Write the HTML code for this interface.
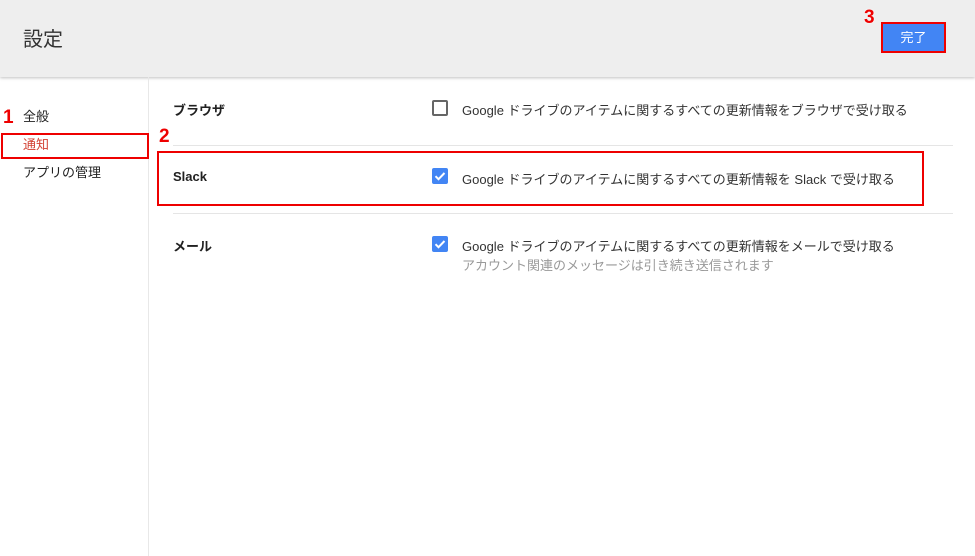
<!DOCTYPE html>
<html><head><meta charset="utf-8"><style>
*{margin:0;padding:0;box-sizing:border-box}
body{width:975px;height:556px;overflow:hidden;background:#fff;font-family:"Liberation Sans","Noto Sans CJK JP",sans-serif;position:relative;color:#212121}
.hdr{position:absolute;left:0;top:0;width:975px;height:77px;background:#eeeeee;box-shadow:0 1px 3px rgba(0,0,0,.25)}
.t{position:absolute;left:23px;top:23px;font-size:20px;color:#333}
.btn{position:absolute;left:881px;top:22px;width:65px;height:31px;border:2px solid #e00;background:#4285f4;color:#fff;font-size:13px;text-align:center;line-height:27px}
.num{position:absolute;color:#e00;font-weight:bold;font-size:19px;text-shadow:0 0 2px #fff}
.side{position:absolute;left:148px;top:77px;width:1px;height:479px;background:#e8e8e8}
.a{position:absolute;font-size:13px}
.rb{position:absolute;border:2px solid #e00}
.sep{position:absolute;left:173px;width:780px;height:1px;background:#e5e5e5}
.lab{position:absolute;left:173px;font-size:13px;font-weight:bold}
.cb{position:absolute;left:432px;width:16px;height:16px;border-radius:2px}
.off{border:2px solid #666}
.on{background:#4285f4}
.txt{position:absolute;left:462px;font-size:13px;color:#333}
</style></head><body>
<div class="hdr"><div class="t">設定</div></div>
<div class="btn">完了</div>
<div class="num" style="left:864px;top:7px">3</div>
<div class="side"></div>
<div class="num" style="left:3px;top:107px">1</div>
<div class="a" style="left:23px;top:106px">全般</div>
<div class="rb" style="left:1px;top:133px;width:148px;height:26px"></div>
<div class="a" style="left:23px;top:134px;color:#d23f31">通知</div>
<div class="a" style="left:23px;top:162px">アプリの管理</div>
<div class="num" style="left:159px;top:126px">2</div>

<div class="lab" style="top:100px">ブラウザ</div>
<div class="cb off" style="top:100px"></div>
<div class="txt" style="top:100px">Google ドライブのアイテムに関するすべての更新情報をブラウザで受け取る</div>
<div class="sep" style="top:145px"></div>
<div class="rb" style="left:157px;top:151px;width:767px;height:55px"></div>
<div class="lab" style="top:169px">Slack</div>
<div class="cb on" style="top:168px"><svg width="16" height="16"><path d="M3.5 8.2l3 3 6-6.2" stroke="#fff" stroke-width="2" fill="none"/></svg></div>
<div class="txt" style="top:169px">Google ドライブのアイテムに関するすべての更新情報を Slack で受け取る</div>
<div class="sep" style="top:213px"></div>
<div class="lab" style="top:236px">メール</div>
<div class="cb on" style="top:236px"><svg width="16" height="16"><path d="M3.5 8.2l3 3 6-6.2" stroke="#fff" stroke-width="2" fill="none"/></svg></div>
<div class="txt" style="top:236px">Google ドライブのアイテムに関するすべての更新情報をメールで受け取る</div>
<div class="txt" style="top:255px;color:#999">アカウント関連のメッセージは引き続き送信されます</div>
</body></html>
